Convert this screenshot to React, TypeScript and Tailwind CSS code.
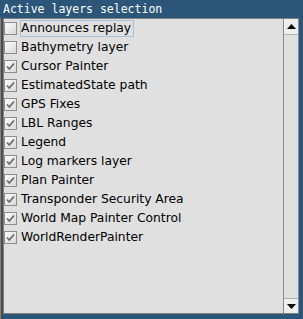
import React from "react"

const layers = [
  { name: "Announces replay", checked: false },
  { name: "Bathymetry layer", checked: false },
  { name: "Cursor Painter", checked: true },
  { name: "EstimatedState path", checked: true },
  { name: "GPS Fixes", checked: true },
  { name: "LBL Ranges", checked: true },
  { name: "Legend", checked: true },
  { name: "Log markers layer", checked: true },
  { name: "Plan Painter", checked: true },
  { name: "Transponder Security Area", checked: true },
  { name: "World Map Painter Control", checked: true },
  { name: "WorldRenderPainter", checked: true },
]

function CheckBox({ checked }: { checked: boolean }) {
  return (
    <svg width="13" height="13" viewBox="0 0 13 13" className="shrink-0">
      <defs>
        <linearGradient id="cb" x1="0" y1="0" x2="1" y2="1">
          <stop offset="0" stopColor="#ffffff" />
          <stop offset="1" stopColor="#d6d6d6" />
        </linearGradient>
      </defs>
      <rect x="0.5" y="0.5" width="12" height="12" fill="url(#cb)" stroke="#8e8e8e" />
      {checked && (
        <path d="M3 6.5 L5.3 9 L10 3.5" fill="none" stroke="#6a6a6a" strokeWidth="1.8" />
      )}
    </svg>
  )
}

export default function App() {
  return (
    <div className="w-[303px] h-[319px] bg-[#2b5679] flex flex-col overflow-hidden">
      {/* Title */}
      <div className="h-[18px] flex items-center pl-[3px] pt-[1px] text-white text-[11.5px] leading-none font-['DejaVu_Sans_Mono',monospace]">
        Active layers selection
      </div>

      <div className="flex-1 flex border-l border-[#c0703a] pl-[2px] pr-[4px] pb-[5px]">
        <div className="flex-1 flex border border-[#808080] border-r-0 bg-[#e0e0e0]">
          {/* List */}
          <div className="flex-1 flex flex-col font-['DejaVu_Sans',sans-serif] text-[12.3px] text-black">
            {layers.map((l, i) => (
              <div key={l.name} className="h-[19px] flex items-center">
                <CheckBox checked={l.checked} />
                <span
                  className={
                    "ml-[3px] pr-[2px] h-[17px] flex items-center border " +
                    (i === 0 ? "border-[#a3c0dc]" : "border-transparent")
                  }
                >
                  {l.name}
                </span>
              </div>
            ))}
          </div>

          {/* Scrollbar */}
          <div className="w-[16px] flex flex-col border-l border-[#8a8a8a] border-r border-r-[#8a8a8a]">
            <div className="h-[16px] bg-[#eeeeee] border-b border-[#b0b0b0] flex items-center justify-center">
              <svg width="9" height="5" viewBox="0 0 9 5">
                <path d="M4.5 0 L9 5 L0 5 Z" fill="#000" />
              </svg>
            </div>
            <div className="flex-1" />
            <div className="h-[15px] bg-[#eeeeee] border-t border-[#b0b0b0] flex items-center justify-center">
              <svg width="9" height="5" viewBox="0 0 9 5">
                <path d="M0 0 L9 0 L4.5 5 Z" fill="#000" />
              </svg>
            </div>
          </div>
        </div>
      </div>
    </div>
  )
}
